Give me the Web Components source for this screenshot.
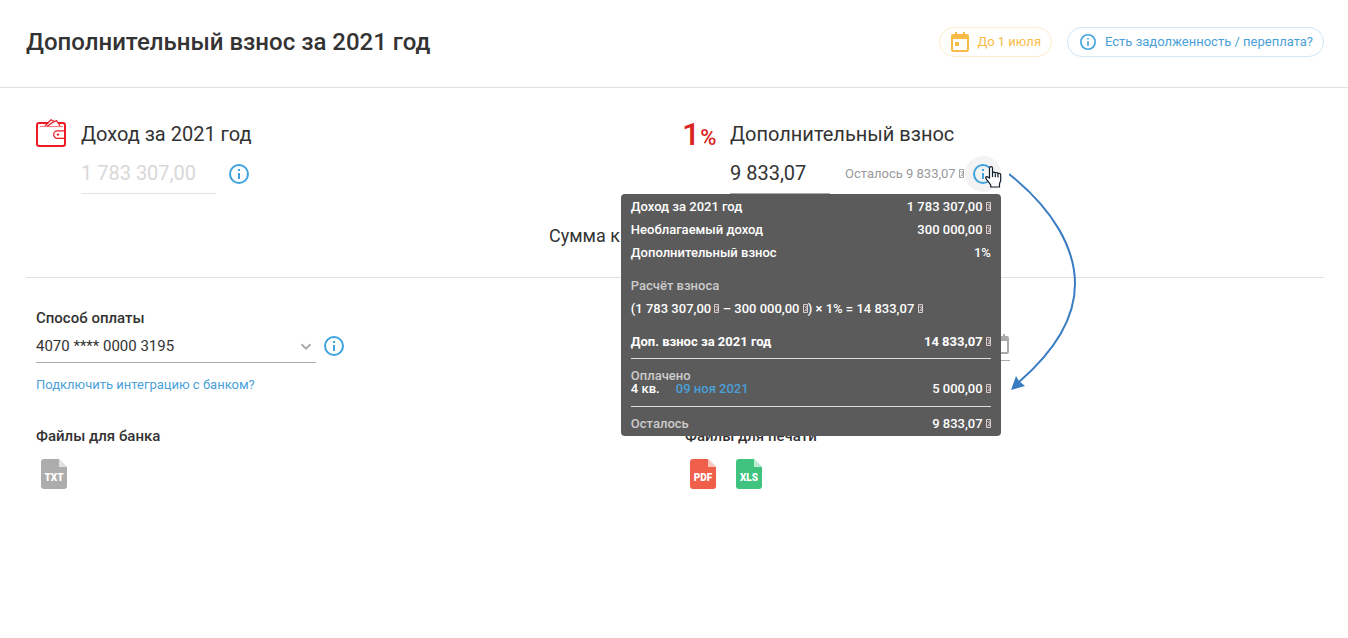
<!DOCTYPE html>
<html lang="ru">
<head>
<meta charset="utf-8">
<title>Дополнительный взнос за 2021 год</title>
<style>
body{margin:0;background:#fff;color:#333;font-family:Roboto,"Liberation Sans",sans-serif;font-size:15px;line-height:20px}
</style>
</head>
<body>
<fee-page></fee-page>
<script>
const define = (name, html) => {
  const t = document.createElement('template');
  t.innerHTML = html;
  customElements.define(name, class extends HTMLElement {
    constructor() {
      super();
      this.attachShadow({ mode: 'open' }).append(t.content.cloneNode(true));
    }
  });
};

define('info-icon', `<style>:host{display:block;width:20px;height:20px;color:#3fa2df}svg{display:block;width:100%;height:100%}</style>
<svg viewBox="0 0 20 20" aria-hidden="true"><circle cx="10" cy="10" r="9" fill="none" stroke="currentColor" stroke-width="2"/><path d="M9 5h2v2H9zM9 9h2v6H9z" fill="currentColor"/></svg>`);

define('rub-sign', `<style>:host{display:inline-block;width:5px;height:9px;vertical-align:baseline}svg{display:block;width:5px;height:9px}</style>
<svg viewBox="0 0 5 9" role="img" aria-label="руб."><path d="M.5.5h4v8h-4zM1.500 2.200l2 2v1l-2 1.800M3.500 2.200l-.6.8M2.900 5.800l.6 1.200" fill="none" stroke="currentColor" stroke-width=".9"/></svg>`);

define('calendar-icon', `<style>:host{display:block;width:18px;height:20px}svg{display:block;width:100%;height:100%}</style>
<svg viewBox="0 0 18 20" aria-hidden="true"><path fill="currentColor" fill-rule="evenodd" d="M4 0h2v2h6V0h2v2h2a2 2 0 0 1 2 2v14a2 2 0 0 1-2 2H2a2 2 0 0 1-2-2V4a2 2 0 0 1 2-2h2zM2 7v11h14V7zM4 10h4v4H4z"/></svg>`);

define('page-header', `<style>
:host{display:flex;align-items:center;gap:15px;padding:27px 24px 30px 26px;border-bottom:1px solid #e0e0e0}
h1{flex:1;margin:0;font-size:24px;line-height:30px;font-weight:500}
button{display:flex;align-items:center;box-sizing:border-box;height:30px;padding:0 10px;border:1px solid;border-radius:15px;background:#fff;font:13px/20px Roboto,sans-serif}
.due{color:#f9bb46;border-color:#fdeccb;gap:8px;padding-left:11px}
.debt{color:#4a9fd8;border-color:#cfe7f7;gap:9px;padding-left:12px}
.debt info-icon{width:16px;height:16px}
</style>
<h1>Дополнительный взнос за 2021 год</h1>
<button class="due"><calendar-icon></calendar-icon>До 1 июля</button>
<button class="debt"><info-icon></info-icon>Есть задолженность / переплата?</button>`);

define('amount-block', `<style>
:host{display:grid;grid-template-columns:30px 1fr;column-gap:15px;padding-left:10px}
h2{margin:0;font-size:20px;line-height:30px;font-weight:400}
.row{grid-column:2;display:flex;align-items:center;height:45px}
::slotted(info-button),::slotted(.left){margin-top:5px}
</style>
<slot name="icon"></slot><h2><slot name="title"></slot></h2><div class="row"><slot></slot></div>`);

define('amount-input', `<style>
:host{display:block;width:135px}
input{display:block;width:100%;height:45px;box-sizing:border-box;border:0;border-bottom:1px solid #aaa;padding:4px 0 0;background:none;font:20px/30px Roboto,sans-serif;color:#333;border-radius:0}
input:disabled{color:#d8d8d8;border-color:#e3e3e3}
</style><input>`);

define('info-button', `<style>
:host{display:block;position:relative}
button{display:grid;place-items:center;width:36px;height:36px;padding:0;border:0;border-radius:50%;background:none}
:host([active]) button{background:#f3f3f3}
</style><button aria-label="Подробнее"><info-icon></info-icon></button><slot></slot>`);

define('tip-row', `<style>:host{display:flex;justify-content:space-between;height:23px;line-height:23px}</style><slot></slot>`);

define('fee-tooltip', `<style>
:host{display:block;position:absolute;z-index:2;right:0;top:38px;width:380px;box-sizing:border-box;padding:1px 10px;border-radius:4px;background:#5b5b5b;color:#fff;font-size:13px;font-weight:500;white-space:nowrap}
.group{margin-bottom:10px}
.muted{color:#ccc}
b{font-weight:700}
hr{height:1px;border:0;margin:5px 0;background:#ddd}
.paid{margin:10px 0 11px;line-height:13px}
.line{display:grid;grid-template-columns:45px 1fr auto}
a{color:#4a9fd8;text-decoration:none}
rub-sign{color:#ecd9d9}
</style>
<div class="group">
<tip-row><span>Доход за 2021 год</span><span>1 783 307,00 <rub-sign></rub-sign></span></tip-row>
<tip-row><span>Необлагаемый доход</span><span>300 000,00 <rub-sign></rub-sign></span></tip-row>
<tip-row><span>Дополнительный взнос</span><span>1%</span></tip-row>
</div>
<div class="group">
<tip-row class="muted"><span>Расчёт взноса</span></tip-row>
<tip-row><span>(1 783 307,00 <rub-sign></rub-sign> – 300 000,00 <rub-sign></rub-sign>) × 1% = 14 833,07 <rub-sign></rub-sign></span></tip-row>
</div>
<tip-row><b>Доп. взнос за 2021 год</b><b>14 833,07 <rub-sign></rub-sign></b></tip-row>
<hr>
<div class="paid"><div class="muted">Оплачено</div>
<div class="line"><span>4 кв.</span><a href="#">09 ноя 2021</a><span>5 000,00 <rub-sign></rub-sign></span></div></div>
<hr>
<tip-row><span class="muted">Осталось</span><span>9 833,07 <rub-sign></rub-sign></span></tip-row>`);

define('hand-cursor', `<style>:host{display:block;position:absolute;z-index:3;left:20px;top:10px;width:17px;height:22px;pointer-events:none}svg{display:block}</style>
<svg width="17" height="22" viewBox="0 0 17 22" aria-hidden="true"><path d="M4.500 12V2C4.500.2 7.500.2 7.500 2v5c.3-1.300 2.700-1.100 2.800.3.4-1.200 2.600-.9 2.700.5.6-1 2.700-.5 2.700 1v5.200c0 1.800-1.200 2.800-1.200 4.300V21H5.700v-2C4.700 17 2.500 15 1 12.700c-.9-1.800.9-2.700 2.200-1.500z" fill="#fff" stroke="#111b2b" stroke-width="1.200"/><path d="M7.500 7v4M10.300 7.500v3.800M13 8.200v3.300" stroke="#111b2b" stroke-width="1.200" fill="none"/></svg>`);

define('pointer-arrow', `<style>:host{display:block;position:absolute;z-index:3;left:44px;top:17px;width:70px;height:220px;pointer-events:none}svg{display:block}</style>
<svg width="70" height="220" viewBox="0 0 70 220" aria-hidden="true"><path d="M0 1C44 36 66 75 66 111C66 149 41 182 10 209" fill="none" stroke="#3a7cc2" stroke-width="2"/><path d="M2 217L7 203L10 208L16 213z" fill="#3a7cc2"/></svg>`);

define('wallet-icon', `<style>:host{display:block;width:30px;height:30px}svg{display:block}</style>
<svg width="30" height="30" viewBox="0 0 30 30" fill="none" stroke="#ed1c24" aria-hidden="true"><rect x="1" y="4" width="28" height="23" rx="2" stroke-width="2"/><path d="M4 7.500h23" stroke-width="1.200" opacity=".55"/><path d="M9 7L15 .8l3 1.500-7 5.200M14 5l6.500-3.500L24 7" stroke-width="1.200" fill="#fff"/><path d="M29 11.800h-7.500a3.800 3.800 0 0 0 0 7.600H29" stroke-width="1.300"/><circle cx="22" cy="15.600" r="1.200" fill="#ed1c24" stroke="none"/></svg>`);

define('percent-icon', `<style>:host{display:flex;align-items:baseline;width:34px;height:30px;margin-left:-3px;color:#d9241f;line-height:30px;white-space:nowrap}.one{font-size:32px;font-weight:500}.pc{font-size:22px;font-weight:500}</style>
<span class="one">1</span><span class="pc">%</span>`);

define('file-button', `<style>
:host{display:block}
button{position:relative;display:block;width:26px;height:30px;padding:7px 0 0;border:0;border-radius:3px;background:var(--fill);color:#fff;font:900 10px/20px Roboto,sans-serif;text-align:center;clip-path:polygon(0 0,18px 0,26px 8px,26px 100%,0 100%)}
button::after{content:"";position:absolute;top:0;right:0;width:8px;height:8px;background:rgba(255,255,255,.65)}
</style><button><slot></slot></button>`);

define('pay-account', `<style>
:host{display:block}
label{display:block;margin-bottom:1px;font-weight:500;line-height:20px}
.row{display:flex;align-items:center;gap:8px;height:34px}
.select{position:relative;width:280px}
select{display:block;width:100%;height:34px;padding:0;border:0;border-bottom:1px solid #aaa;border-radius:0;background:none;appearance:none;font:15px/20px Roboto,sans-serif;color:#333}
svg{position:absolute;right:4px;top:14px}
a{display:block;margin-top:12px;color:#4a9fd8;font-size:13px;line-height:20px;text-decoration:none}
</style>
<label for="acc">Способ оплаты</label>
<div class="row"><div class="select"><select id="acc"><option>4070 **** 0000 3195</option></select>
<svg width="12" height="8" viewBox="0 0 12 8" aria-hidden="true"><path d="M1.500 1.200L6 5.700l4.500-4.500" fill="none" stroke="#aaa" stroke-width="2"/></svg></div>
<info-icon></info-icon></div>
<a href="#">Подключить интеграцию с банком?</a>`);

define('pay-date', `<style>
:host{display:block;padding-top:20px}
.field{display:flex;align-items:center;width:325px;height:33px;box-sizing:border-box;padding-right:1px;border-bottom:1px solid #aaa;color:#aaa}
input{flex:1;min-width:0;border:0;background:none}
</style><div class="field"><input aria-label="Дата платежа"><calendar-icon></calendar-icon></div>`);

define('file-group', `<style>
:host{display:block}
h3{margin:0;font-size:15px;line-height:20px;font-weight:500}
.files{display:flex;gap:20px;padding:13px 5px 0}
</style><h3><slot name="title"></slot></h3><div class="files"><slot></slot></div>`);

define('fee-page', `<style>
:host{display:block}
main{padding:0 24px 0 26px}
.cols{display:grid;grid-template-columns:1fr 1fr}
.top{padding-top:31px}
.short{width:100px}
.left{margin-left:15px;padding-right:1px;font-size:13px;color:#999;white-space:nowrap}
.spaced{margin-left:5px}
.total{display:grid;justify-content:center;grid-template-columns:252px;padding:32px 0 31px;border-bottom:1px solid #e0e0e0;font-size:18px;line-height:20px}
.pay{padding-top:30px;row-gap:31px}
.pay>*{padding-left:10px}
</style>
<page-header></page-header>
<main>
<section class="cols top">
<amount-block><wallet-icon slot="icon"></wallet-icon><span slot="title">Доход за 2021 год</span>
<amount-input value="1 783 307,00" label="Доход за 2021 год" disabled></amount-input><info-button class="spaced"></info-button></amount-block>
<amount-block><percent-icon slot="icon"></percent-icon><span slot="title">Дополнительный взнос</span>
<amount-input class="short" value="9 833,07" label="Дополнительный взнос"></amount-input>
<span class="left">Осталось 9 833,07 <rub-sign></rub-sign></span>
<info-button active><fee-tooltip></fee-tooltip><hand-cursor></hand-cursor><pointer-arrow></pointer-arrow></info-button></amount-block>
</section>
<div class="total"><span>Сумма к</span></div>
<section class="cols pay">
<pay-account></pay-account><pay-date></pay-date>
<file-group><span slot="title">Файлы для банка</span><file-button style="--fill:#adadad">TXT</file-button></file-group>
<file-group><span slot="title">Файлы для печати</span><file-button style="--fill:#ef5f49">PDF</file-button><file-button style="--fill:#41c380">XLS</file-button></file-group>
</section>
</main>`);

for (const el of document.querySelector('fee-page').shadowRoot.querySelectorAll('amount-input')) {
  const input = el.shadowRoot.querySelector('input');
  input.value = el.getAttribute('value');
  input.setAttribute('aria-label', el.getAttribute('label'));
  input.disabled = el.hasAttribute('disabled');
}
</script>
</body>
</html>
